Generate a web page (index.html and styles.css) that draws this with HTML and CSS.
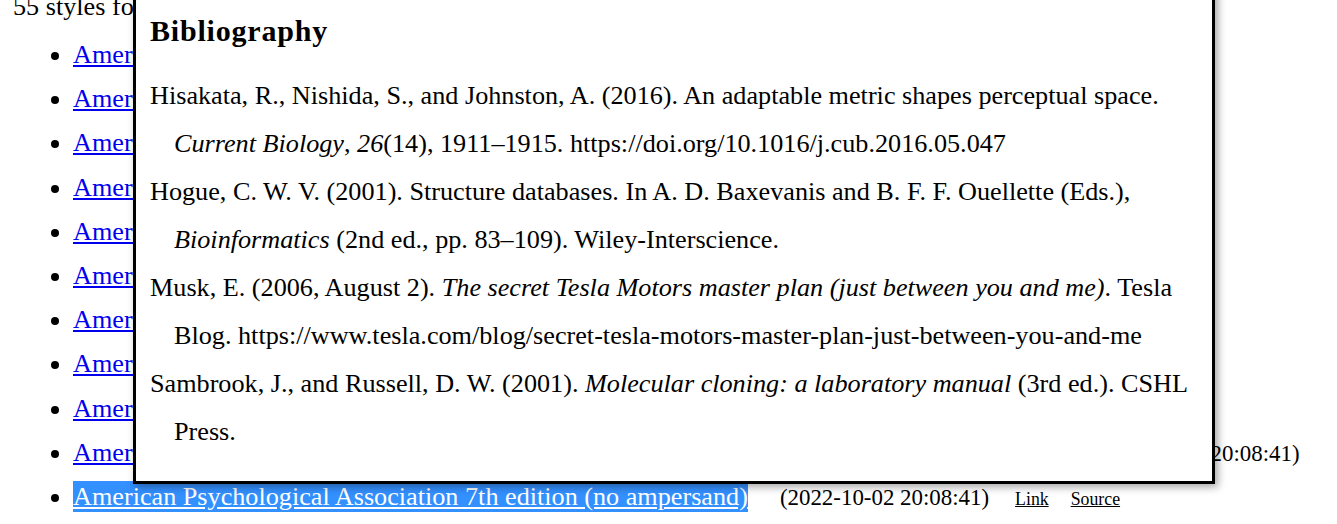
FILE: index.html
```html
<!DOCTYPE html>
<html lang="en">
<head>
<meta charset="utf-8">
<title>Styles</title>
<link rel="stylesheet" href="styles.css">
</head>
<body>
<div class="page">
  <p class="count">55 styles found:</p>
  <ul class="styles">
    <li><a href="#">American Psychological Association 6th edition</a><span class="date">(2022-10-02 20:08:41)</span></li>
    <li><a href="#">American Psychological Association 6th edition (no ampersand)</a></li>
    <li><a href="#">American Psychological Association 7th edition</a><span class="date">(2022-10-02 20:08:41)</span></li>
    <li><a href="#">American Psychological Association 7th edition (annotated)</a></li>
    <li><a href="#">American Psychological Association 7th edition (CV)</a></li>
    <li><a href="#">American Psychological Association 7th edition (no initials)</a></li>
    <li><a href="#">American Psychological Association 7th edition (numeric)</a></li>
    <li><a href="#">American Psychological Association 7th edition (brackets)</a></li>
    <li><a href="#">American Psychological Association 7th edition (single-spaced)</a></li>
    <li><a href="#">American Psychological Association 7th edition (curriculum vitae, sorted by descending date)</a><span class="date">(2022-10-02 20:08:41)</span></li>
    <li><a href="#" class="selected">American Psychological Association 7th edition (no ampersand)</a><span class="date">(2022-10-02 20:08:41)</span><a href="#" class="small first">Link</a><a href="#" class="small">Source</a></li>
  </ul>

  <div class="popup">
    <h2 class="popup-title">Bibliography</h2>
    <div class="entry">Hisakata, R., Nishida, S., and Johnston, A. (2016). An adaptable metric shapes perceptual space. <i>Current Biology</i>, <i>26</i>(14), 1911–1915. https://doi.org/10.1016/j.cub.2016.05.047</div>
    <div class="entry">Hogue, C. W. V. (2001). Structure databases. In A. D. Baxevanis and B. F. F. Ouellette (Eds.), <i>Bioinformatics</i> (2nd ed., pp. 83–109). Wiley-Interscience.</div>
    <div class="entry">Musk, E. (2006, August 2). <i>The secret Tesla Motors master plan (just between you and me)</i>. Tesla Blog. https://www.tesla.com/blog/secret-tesla-motors-master-plan-just-between-you-and-me</div>
    <div class="entry">Sambrook, J., and Russell, D. W. (2001). <i>Molecular cloning: a laboratory manual</i> (3rd ed.). CSHL Press.</div>
  </div>
</div>
</body>
</html>
```

FILE: styles.css
```css
html, body {
  margin: 0;
  padding: 0;
  background: #ffffff;
  overflow: hidden;
}

body {
  font-family: "Liberation Serif", "Times New Roman", serif;
  font-size: 26.2px;
  color: #000000;
}

.page {
  position: relative;
  margin-top: -15px;
  padding-left: 13px;
  height: 560px;
}

.count {
  margin: 0;
  line-height: 44px;
}

.styles {
  margin: 4px 0 0;
  padding-left: 60px;
  list-style: disc;
}

.styles li {
  line-height: 44.2px;
  height: 44.2px;
  white-space: nowrap;
}

.styles a {
  color: #0000ee;
  text-decoration: underline;
}

.styles a.selected {
  background: #3390ff;
  color: #ffffff;
  padding: 1px 0;
}

.date {
  font-size: 22.9px;
  line-height: 1;
  margin-left: 32px;
  color: #000000;
}

.styles a.small {
  font-size: 17.8px;
  line-height: 1;
  color: #000000;
  margin-left: 22px;
}

.styles a.small.first {
  margin-left: 26px;
}

.popup {
  position: absolute;
  left: 133px;
  top: -24px;
  width: 1082px;
  box-sizing: border-box;
  border: 3px solid #000000;
  background: #ffffff;
  padding: 51px 14px 25px 14px;
  box-shadow: 3px 3px 8px rgba(0, 0, 0, 0.35);
}

.popup-title {
  margin: 0 0 25px;
  font-size: 30px;
  letter-spacing: 0.8px;
  font-weight: bold;
  line-height: 32px;
}

.entry {
  line-height: 48px;
  padding-left: 24px;
  text-indent: -24px;
}
```
